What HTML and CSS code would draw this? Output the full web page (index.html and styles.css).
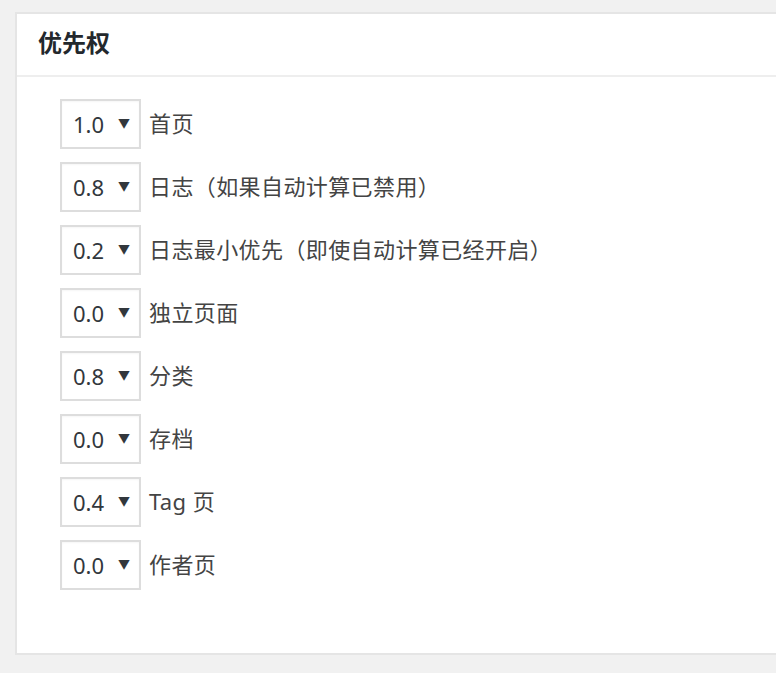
FILE: index.html
```html
<!DOCTYPE html>
<html lang="zh-CN">
<head>
  <meta charset="UTF-8">
  <title>优先权</title>
  <link rel="stylesheet" href="styles.css">
</head>
<body>
  <div class="postbox">
    <h2 class="hndle">优先权</h2>
    <div class="inside">
      <ul class="prio-list">
        <li><span class="sel"><select><option>1.0</option></select><i class="arrow">&#9660;</i></span><span class="lbl">首页</span></li>
        <li><span class="sel"><select><option>0.8</option></select><i class="arrow">&#9660;</i></span><span class="lbl">日志（如果自动计算已禁用）</span></li>
        <li><span class="sel"><select><option>0.2</option></select><i class="arrow">&#9660;</i></span><span class="lbl">日志最小优先（即使自动计算已经开启）</span></li>
        <li><span class="sel"><select><option>0.0</option></select><i class="arrow">&#9660;</i></span><span class="lbl">独立页面</span></li>
        <li><span class="sel"><select><option>0.8</option></select><i class="arrow">&#9660;</i></span><span class="lbl">分类</span></li>
        <li><span class="sel"><select><option>0.0</option></select><i class="arrow">&#9660;</i></span><span class="lbl">存档</span></li>
        <li><span class="sel"><select><option>0.4</option></select><i class="arrow">&#9660;</i></span><span class="lbl">Tag 页</span></li>
        <li><span class="sel"><select><option>0.0</option></select><i class="arrow">&#9660;</i></span><span class="lbl">作者页</span></li>
      </ul>
    </div>
  </div>
</body>
</html>
```

FILE: styles.css
```css
/* ─── Base ─── */
body {
  margin: 0;
  background: #f1f1f1;
  font-family: "Noto Sans", "Noto Sans CJK SC", sans-serif;
  color: #444;
  overflow: hidden;
}

.postbox {
  margin: 12px 0 0 15px;
  width: 800px;
  background: #fff;
  border: 2px solid #e5e5e5;
  box-sizing: border-box;
  height: 643px;
}
.hndle {
  margin: 0;
  height: 61px;
  line-height: 58px;
  padding: 0 21px;
  font-size: 24px;
  font-weight: bold;
  color: #23282d;
  border-bottom: 2px solid #eee;
}
.inside { padding: 22px 0 0 43px; }

.prio-list { list-style: none; margin: 0; padding: 0; }
.prio-list li {
  display: flex; align-items: center; gap: 8px;
  height: 50px; margin-bottom: 13px;
  font-size: 22px; color: #444;
}
.lbl { margin-bottom: 4px; letter-spacing: 0.4px; }

.sel { position: relative; display: inline-block; }
.sel select {
  -webkit-appearance: none; appearance: none;
  width: 81px; height: 50px;
  border: 2px solid #ddd; border-radius: 0;
  background: #fff; color: #32373c;
  font-family: inherit; font-size: 22px;
  padding: 0 0 0 11px;
  box-shadow: inset 0 1px 2px rgba(0,0,0,0.04);
}
.sel .arrow {
  position: absolute; right: 11px; top: 15px;
  font-style: normal; font-size: 12px; color: #32373c;
  pointer-events: none;
}
```
